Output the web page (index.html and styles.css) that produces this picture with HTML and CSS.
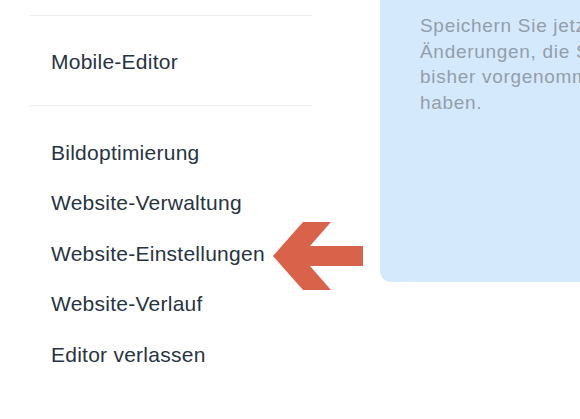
FILE: index.html
```html
<!DOCTYPE html>
<html lang="de">
<head>
    <meta charset="UTF-8">
    <meta name="viewport" content="width=device-width, initial-scale=1.0">
    <title>Editor-Menü</title>
    <link rel="stylesheet" href="styles.css">
</head>
<body>
    <div class="page">
        <div class="sidebar">
            <div class="menu-group first">
                <div class="menu-item">Mobile-Editor</div>
            </div>
            <div class="menu-group">
                <div class="menu-item">Bildoptimierung</div>
                <div class="menu-item">Website-Verwaltung</div>
                <div class="menu-item highlighted">
                    Website-Einstellungen
                    <svg class="pointer" width="90" height="68" viewBox="0 0 90 68">
                        <polygon points="0,34 30,0 58,0 37,24 90,24 90,44 37,44 58,68 30,68" fill="#d9634a"/>
                    </svg>
                </div>
                <div class="menu-item">Website-Verlauf</div>
                <div class="menu-item">Editor verlassen</div>
            </div>
        </div>

        <div class="info-panel">
            <p class="info-text">Speichern Sie jetzt alle<br>Änderungen, die Sie<br>bisher vorgenommen<br>haben.</p>
        </div>
    </div>
</body>
</html>
```

FILE: styles.css
```css
body {
    margin: 0;
    background: #fff;
    font-family: "Liberation Sans", Arial, sans-serif;
    overflow: hidden;
}
.page {
    display: flex;
    align-items: flex-start;
    width: 580px;
    height: 419px;
    overflow: hidden;
}
.sidebar {
    width: 283px;
    margin-left: 29px;
    padding-top: 15px;
    flex-shrink: 0;
}
.menu-group {
    border-top: 1px solid #efefef;
    padding: 21.5px 0 0 22px;
}
.menu-group.first {
    padding-top: 21px;
    padding-bottom: 17.5px;
}
.menu-item {
    position: relative;
    font-size: 21px;
    letter-spacing: 0.25px;
    line-height: 50.5px;
    color: #283440;
    white-space: nowrap;
}
.pointer {
    position: absolute;
    left: 222px;
    top: -6.5px;
}
.info-panel {
    margin-left: 68px;
    width: 320px;
    height: 282px;
    flex-shrink: 0;
    background: #d5e9fd;
    border-bottom-left-radius: 11px;
    box-sizing: border-box;
    padding: 13px 0 0 40px;
}
.info-text {
    margin: 0;
    font-size: 19px;
    letter-spacing: 0.7px;
    line-height: 25.5px;
    color: #929eaa;
    white-space: nowrap;
}
```
